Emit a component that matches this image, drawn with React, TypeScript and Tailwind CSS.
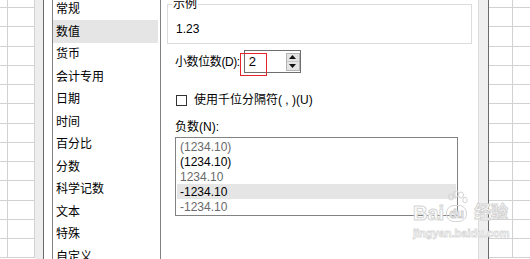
import React from 'react'

const categories = ['常规', '数值', '货币', '会计专用', '日期', '时间', '百分比', '分数', '科学记数', '文本', '特殊', '自定义']

const negatives = [
  { label: '(1234.10)', color: 'text-[#6a6a6a]' },
  { label: '(1234.10)', color: 'text-black' },
  { label: '1234.10', color: 'text-[#6a6a6a]' },
  { label: '-1234.10', color: 'text-black', selected: true },
  { label: '-1234.10', color: 'text-[#6a6a6a]' },
]

const rows = Array.from({ length: 14 })

function SheetLeft() {
  return (
    <div className="w-[35px] shrink-0 flex flex-col -mt-[11.25px]">
      {rows.map((_, i) => (
        <div key={i} className="h-[19.25px] shrink-0 flex border-b border-[#d2d2d2]">
          <div className="w-[8px] border-r border-[#d2d2d2]" />
          <div className="w-[27px] border-r border-[#d2d2d2]" />
        </div>
      ))}
    </div>
  )
}

function SheetRight() {
  return (
    <div className="flex-1 flex flex-col -mt-[11.25px]">
      {rows.map((_, i) => (
        <div key={i} className="h-[19.25px] shrink-0 flex border-b border-[#d2d2d2]">
          <div className="w-[24px] border-r border-[#d2d2d2]" />
          <div className="flex-1" />
        </div>
      ))}
    </div>
  )
}

function Spinner() {
  return (
    <div className="w-[14px] h-[18px] flex flex-col border border-[#b4b4b4] bg-[#e4e4e4]">
      <div className="flex-1 flex items-center justify-center border-b border-[#c8c8c8]">
        <svg width="7" height="4" viewBox="0 0 7 4">
          <path d="M0 4 L3.5 0 L7 4 Z" fill="#111" />
        </svg>
      </div>
      <div className="flex-1 flex items-center justify-center">
        <svg width="7" height="4" viewBox="0 0 7 4">
          <path d="M0 0 L7 0 L3.5 4 Z" fill="#111" />
        </svg>
      </div>
    </div>
  )
}

function Watermark() {
  return (
    <div className="absolute left-[413px] top-[203px] pointer-events-none select-none">
      <div className="flex items-end gap-[2px]">
        <span className="text-[20px] leading-[20px] font-bold text-white [-webkit-text-stroke:1px_#d4d4d4]">Bai</span>
        <div className="relative w-[22px] h-[20px]">
          <svg width="22" height="22" viewBox="0 0 22 22" className="absolute left-0 -top-[12px]">
            <ellipse cx="5" cy="6" rx="2.5" ry="3" fill="none" stroke="#d4d4d4" />
            <ellipse cx="10" cy="3" rx="2.5" ry="3" fill="none" stroke="#d4d4d4" />
            <ellipse cx="15" cy="4" rx="2.5" ry="3" fill="none" stroke="#d4d4d4" />
            <ellipse cx="19" cy="9" rx="2.2" ry="2.8" fill="none" stroke="#d4d4d4" />
          </svg>
          <div className="absolute left-0 top-[2px] w-[21px] h-[17px] rounded-[8px] border border-[#d4d4d4] flex items-center justify-center">
            <span className="text-[12px] leading-[12px] font-bold text-white [-webkit-text-stroke:1px_#cecece]">du</span>
          </div>
        </div>
        <span className="ml-[4px] text-[17px] leading-[20px] font-bold text-white [-webkit-text-stroke:1px_#d4d4d4]">经验</span>
      </div>
      <div className="mt-[4px] text-[11px] leading-[12px] font-bold text-white [-webkit-text-stroke:0.8px_#d8d8d8]">jingyan.baidu.com</div>
    </div>
  )
}

export default function App() {
  return (
    <div className="relative w-[530px] h-[259px] overflow-hidden bg-white flex text-[12px] leading-[14px] text-black [font-family:'Liberation_Sans','Noto_Sans_CJK_SC',sans-serif]">
      <SheetLeft />
      <div className="w-[8px] shrink-0 bg-[#ededed]" />
      <div className="w-[1px] shrink-0 bg-[#6a6a6a]" />

      {/* dialog body */}
      <div className="w-[434px] shrink-0 flex pl-[8px]">
        <div className="w-[109px] shrink-0 border-x border-[#828282] flex flex-col -mt-[2.25px]">
          {categories.map((c, i) => (
            <div
              key={c}
              className={
                'h-[22.5px] shrink-0 flex items-center pl-[3px] mr-[2px] ' +
                (i === 1 ? 'bg-[#e5e5e5]' : '')
              }
            >
              {c}
            </div>
          ))}
        </div>

        <div className="ml-[6px] w-[305px] flex flex-col">
          <div className="relative mt-[4px] h-[40px] border border-[#dcdcdc] pl-[8px] pt-[16px]">
            <span className="absolute left-[4px] -top-[8px] px-[1px] bg-white">示例</span>
            <div className="leading-[16px]">1.23</div>
          </div>

          <div className="mt-[6px] h-[23px] flex items-center pl-[8px]">
            <span className="tracking-[-0.4px]">小数位数(D):</span>
            <div className="relative ml-[4px] w-[57px] h-[23px] border border-[#6e6e6e] flex items-center justify-between pl-[4px]">
              <span className="text-[13px]">2</span>
              <Spinner />
              <div className="absolute -left-[5px] top-[2px] w-[27px] h-[23px] border border-[#e3262a]" />
            </div>
          </div>

          <div className="mt-[20px] h-[14px] flex items-center pl-[9px]">
            <div className="w-[11px] h-[11px] border border-[#333]" />
            <span className="ml-[7px]">使用千位分隔符( , )(U)</span>
          </div>

          <div className="mt-[13px] pl-[8px]">负数(N):</div>

          <div className="ml-[8px] mt-[3px] w-[283px] h-[79px] border border-[#828282] pt-[1px] px-[1px]">
            {negatives.map((n, i) => (
              <div
                key={i}
                className={
                  'h-[15px] flex items-center pl-[3px] ' +
                  n.color +
                  (n.selected ? ' bg-[#e5e5e5]' : '')
                }
              >
                {n.label}
              </div>
            ))}
          </div>
        </div>
      </div>

      <div className="w-[1px] shrink-0 bg-[#dadada]" />
      <div className="w-[9px] shrink-0 bg-[#efefef]" />
      <div className="w-[1px] shrink-0 bg-[#6a6a6a]" />
      <SheetRight />

      <Watermark />
    </div>
  )
}
